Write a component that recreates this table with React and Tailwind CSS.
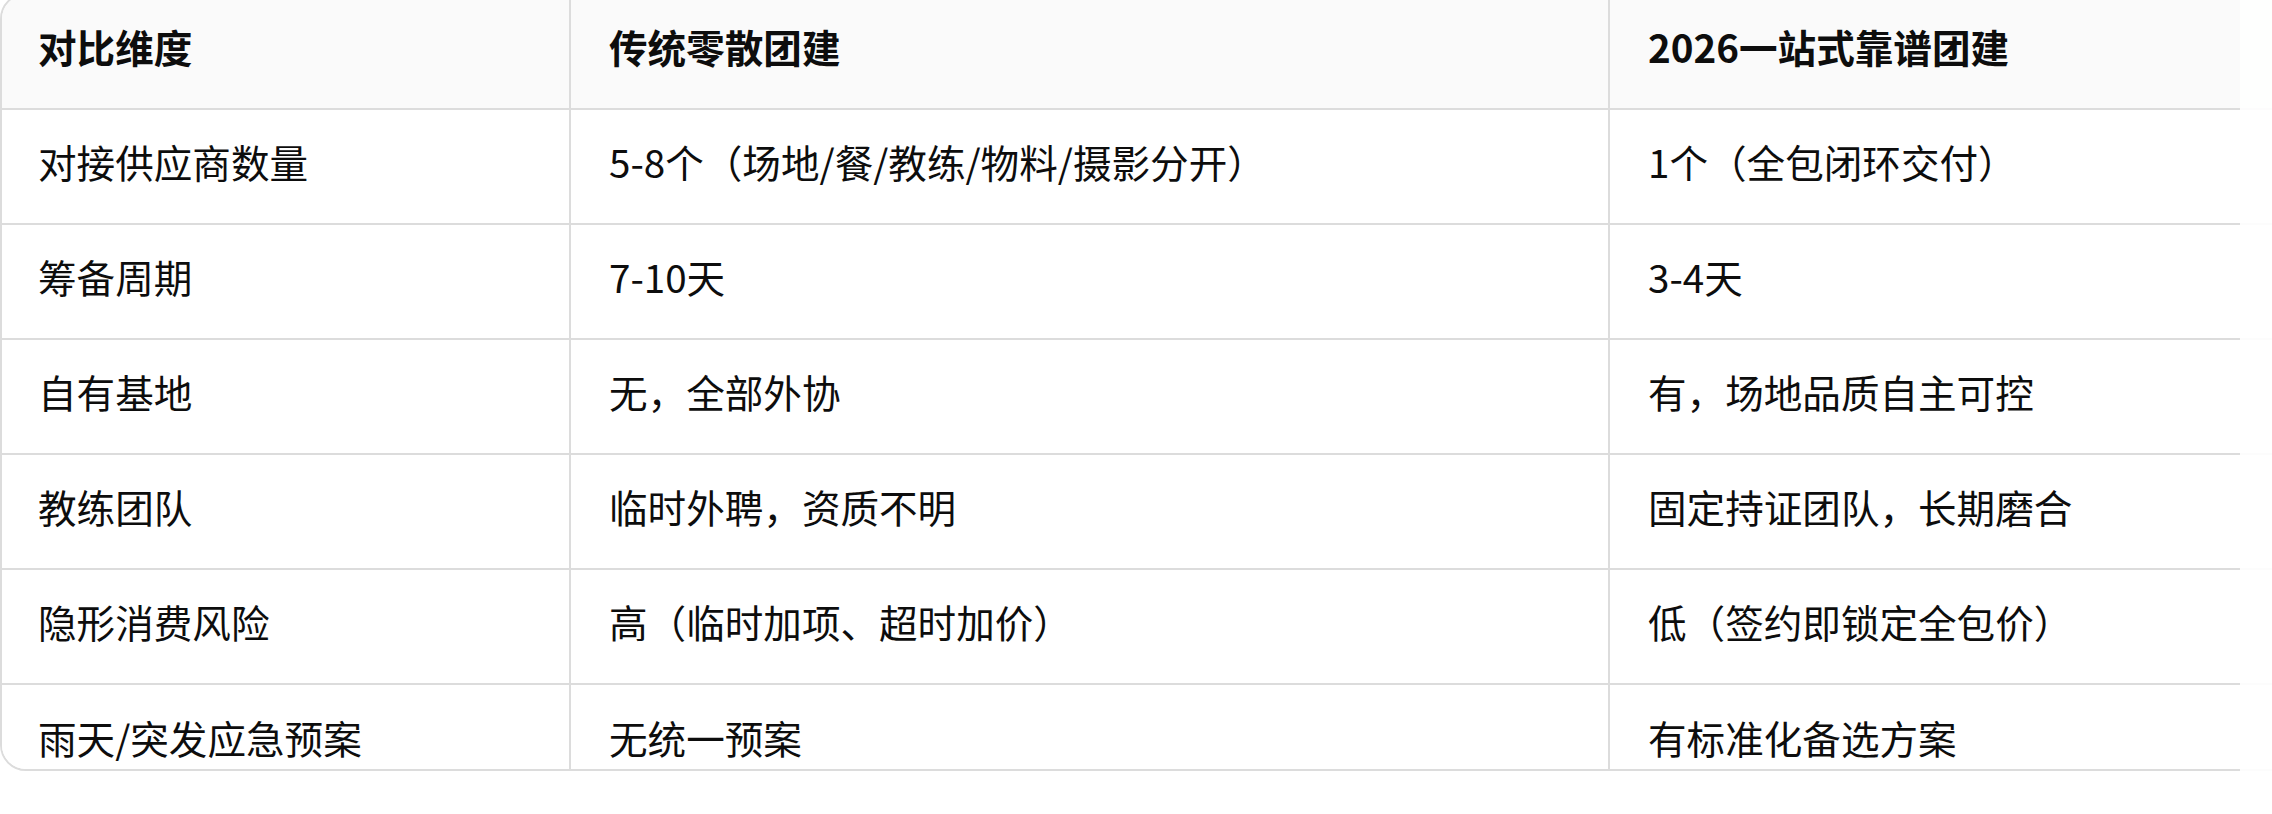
const header = ["对比维度", "传统零散团建", "2026一站式靠谱团建"];

const rows = [
  ["对接供应商数量", "5-8个（场地/餐/教练/物料/摄影分开）", "1个（全包闭环交付）"],
  ["筹备周期", "7-10天", "3-4天"],
  ["自有基地", "无，全部外协", "有，场地品质自主可控"],
  ["教练团队", "临时外聘，资质不明", "固定持证团队，长期磨合"],
  ["隐形消费风险", "高（临时加项、超时加价）", "低（签约即锁定全包价）"],
  ["雨天/突发应急预案", "无统一预案", "有标准化备选方案"],
];

function Row({ cells, head, last }) {
  return (
    <div
      className={`flex h-[115px] shrink-0 ${last ? "" : "border-b-2 border-[#dcdcdc]"} ${
        head ? "bg-[#fafafa] font-bold" : "bg-white"
      }`}
    >
      <div className="w-[569px] shrink-0 flex items-center pl-[36px] pb-[10px] border-r-2 border-[#dcdcdc]">
        {cells[0]}
      </div>
      <div className="w-[1039px] shrink-0 flex items-center pl-[38px] pb-[10px] border-r-2 border-[#dcdcdc]">
        {cells[1]}
      </div>
      <div className="flex-1 flex items-center pl-[38px] pb-[10px]">{cells[2]}</div>
    </div>
  );
}

export default function App() {
  return (
    <div className="relative w-full h-[814px] overflow-hidden bg-white">
      <div className="mt-[-7px] w-[2420px] h-[778px] flex flex-col rounded-[26px] border-2 border-[#dcdcdc] overflow-hidden text-[38.6px] leading-[57.6px] text-[#0d0d0d] font-['Noto_Sans_CJK_SC','Noto_Sans',sans-serif] whitespace-nowrap">
        <Row cells={header} head />
        {rows.map((r, i) => (
          <Row key={i} cells={r} last={i === rows.length - 1} />
        ))}
      </div>
      <div className="absolute top-0 right-0 w-[32px] h-[772px] bg-white/90" />
    </div>
  );
}
